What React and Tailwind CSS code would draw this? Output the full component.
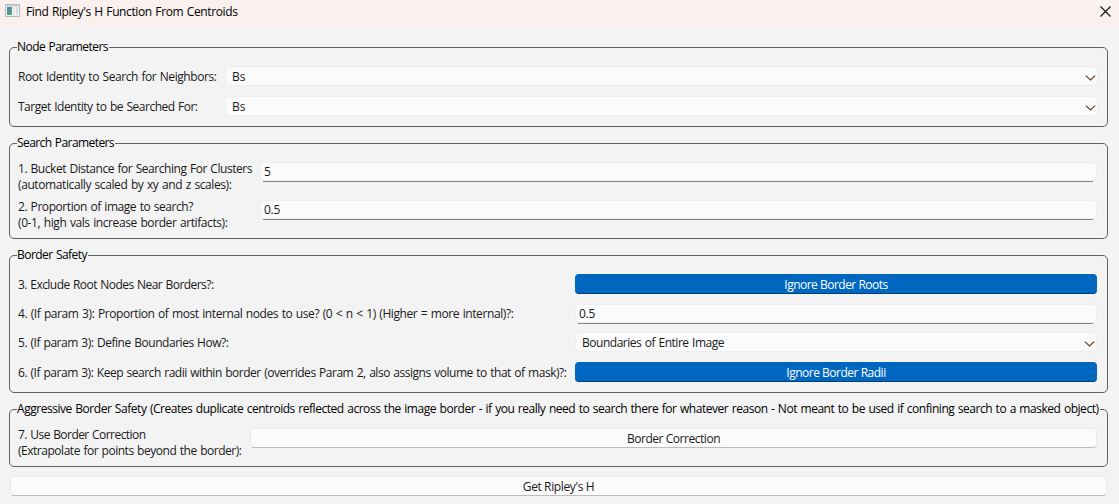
function Group({ title, tracking, className, children }) {
  return (
    <fieldset className={`min-w-0 rounded-[5px] border border-[#606060] px-2 ${className}`}>
      <legend className={`-ml-px h-[17px] whitespace-nowrap pr-px leading-[16px] text-black ${tracking}`}>{title}</legend>
      {children}
    </fieldset>
  );
}

function Label({ className = "", children }) {
  return <span className={`block whitespace-nowrap leading-4 ${className}`}>{children}</span>;
}

function Select({ value, className = "" }) {
  return (
    <div className={`flex h-5 min-w-0 flex-1 items-center justify-between rounded-[4px] border border-[#eeeeee] bg-[#fbfbfb] pl-1.5 ${className}`}>
      <span className="whitespace-nowrap pt-0.5">{value}</span>
      <svg className="mr-px mt-[3px] h-[6px] w-[11px] shrink-0" viewBox="0 0 11 6" fill="none" stroke="#5c3a1e" strokeWidth="1.1">
        <path d="M0.8 0.6 L5.5 5 L10.2 0.6" />
      </svg>
    </div>
  );
}

function Input({ value }) {
  return (
    <div className="flex h-5 min-w-0 flex-1 flex-col">
      <div className="flex h-[19px] items-center rounded-[4px] border border-[#eeeeee] bg-[#fbfbfb] pl-[3px]">
        <span className="tracking-[-0.3px]">{value}</span>
      </div>
      <div className="ml-[3px] mr-1 h-px bg-[#868686]" />
    </div>
  );
}

function PrimaryButton({ className, children }) {
  return (
    <button className={`h-5 flex-1 rounded-[4px] border-b border-[#003e73] bg-[#0067c0] pt-0.5 leading-[17px] text-white ${className}`}>
      {children}
    </button>
  );
}

function PlainButton({ className, children }) {
  return (
    <button className={`h-5 rounded-[4px] border border-[#e9e9e9] border-b-[#bdbdbd] bg-[#fbfbfb] pt-0.5 leading-[16px] ${className}`}>
      {children}
    </button>
  );
}

export default function App() {
  return (
    <div className="flex h-[504px] w-[1119px] flex-col overflow-hidden bg-[#f3f3f3] font-['Open_Sans','Noto_Sans',sans-serif] text-[12px] text-[#1a1a1a] [word-spacing:0.8px]">
      <header className="flex h-[27px] shrink-0 items-center justify-between bg-[#faf0ee] pb-[4px] pl-[5px] pr-[8px]">
        <div className="flex items-center gap-[6px]">
          <svg className="-mt-px h-[14px] w-[15px]" viewBox="0 0 15 14">
            <defs>
              <linearGradient id="pane" x1="0" y1="0" x2="1" y2="1">
                <stop offset="0" stopColor="#4a7fb5" />
                <stop offset="1" stopColor="#58b077" />
              </linearGradient>
            </defs>
            <rect x="0.5" y="0.5" width="14" height="12" fill="#f4f5f5" stroke="#b4babf" />
            <rect x="1" y="1" width="13" height="1.5" fill="#c9d0d6" />
            <rect x="2" y="3" width="5" height="8" fill="url(#pane)" />
            <rect x="8" y="3" width="2" height="8" fill="#e3e6e8" />
            <rect x="11" y="3" width="2" height="8" fill="#d3e3da" />
          </svg>
          <h1 className="whitespace-nowrap tracking-[-0.382px] text-black">Find Ripley's H Function From Centroids</h1>
        </div>
        <svg className="-mt-px h-[11px] w-[11px]" viewBox="0 0 11 11" fill="none" stroke="#1a1a1a" strokeWidth="1.2">
          <path d="M0.5 0.5 L10.5 10.5 M10.5 0.5 L0.5 10.5" />
        </svg>
      </header>

      <main className="flex flex-col gap-2 pl-[9px] pr-[11px] pt-3">
        <Group title="Node Parameters" tracking="tracking-[-0.546px]" className="h-[88px]">
          <div className="flex flex-col gap-[10px] pr-px pt-[10px]">
            <div className="flex h-5 items-center">
              <Label className="w-[207px] pt-0.5 tracking-[-0.428px]">Root Identity to Search for Neighbors:</Label>
              <Select value="Bs" />
            </div>
            <div className="flex h-5 items-center">
              <Label className="w-[207px] pt-0.5 tracking-[-0.494px]">Target Identity to be Searched For:</Label>
              <Select value="Bs" />
            </div>
          </div>
        </Group>

        <Group title="Search Parameters" tracking="tracking-[-0.58px]" className="h-[104px]">
          <div className="flex flex-col gap-1.5 pr-[2px] pt-[9px]">
            <div className="flex h-8">
              <div className="w-[242px]">
                <Label className="tracking-[-0.459px]">1. Bucket Distance for Searching For Clusters</Label>
                <Label className="tracking-[-0.401px]">(automatically scaled by xy and z scales):</Label>
              </div>
              <div className="flex flex-1 pt-px">
                <Input value="5" />
              </div>
            </div>
            <div className="flex h-8">
              <div className="w-[242px]">
                <Label className="tracking-[-0.437px]">2. Proportion of image to search?</Label>
                <Label className="tracking-[-0.404px]">(0-1, high vals increase border artifacts):</Label>
              </div>
              <div className="flex flex-1 pt-px">
                <Input value="0.5" />
              </div>
            </div>
          </div>
        </Group>

        <Group title="Border Safety" tracking="tracking-[-0.546px]" className="h-[146px]">
          <div className="flex flex-col pr-[2px] pt-[10px]">
            <div className="mb-[10px] flex h-5 items-center">
              <Label className="w-[557px] pt-0.5 tracking-[-0.547px]">3. Exclude Root Nodes Near Borders?:</Label>
              <PrimaryButton className="tracking-[-0.506px]">Ignore Border Roots</PrimaryButton>
            </div>
            <div className="mb-2 flex h-5 items-center">
              <Label className="w-[557px] tracking-[-0.408px]">
                4. (If param 3): Proportion of most internal nodes to use? (0 &lt; n &lt; 1) (Higher = more internal)?:
              </Label>
              <Input value="0.5" />
            </div>
            <div className="mb-[10px] flex h-5 items-center">
              <Label className="w-[557px] pt-0.5 tracking-[-0.465px]">5. (If param 3): Define Boundaries How?:</Label>
              <Select value="Boundaries of Entire Image" className="tracking-[-0.479px]" />
            </div>
            <div className="flex h-5 items-center">
              <Label className="w-[557px] pt-0.5 tracking-[-0.475px]">
                6. (If param 3): Keep search radii within border (overrides Param 2, also assigns volume to that of mask)?:
              </Label>
              <PrimaryButton className="tracking-[-0.487px]">Ignore Border Radii</PrimaryButton>
            </div>
          </div>
        </Group>

        <Group
          title="Aggressive Border Safety (Creates duplicate centroids reflected across the image border - if you really need to search there for whatever reason - Not meant to be used if confining search to a masked object)"
          tracking="tracking-[-0.46px]"
          className="h-[66px]"
        >
          <div className="flex pr-[2px] pt-[9px]">
            <div className="w-[232px]">
              <Label className="tracking-[-0.554px]">7. Use Border Correction</Label>
              <Label className="tracking-[-0.473px]">(Extrapolate for points beyond the border):</Label>
            </div>
            <PlainButton className="mt-px flex-1 tracking-[-0.455px]">Border Correction</PlainButton>
          </div>
        </Group>

        <PlainButton className="ml-px mr-px mt-px tracking-[-0.38px]">Get Ripley's H</PlainButton>
      </main>
    </div>
  );
}
